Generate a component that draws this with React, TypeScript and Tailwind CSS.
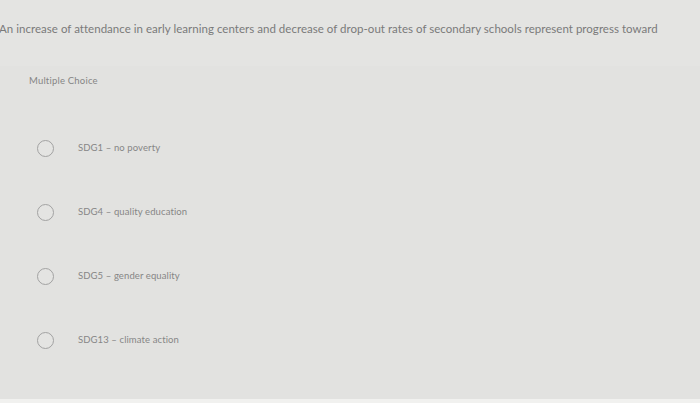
import React from 'react';

const options = [
  'SDG1 – no poverty',
  'SDG4 – quality education',
  'SDG5 – gender equality',
  'SDG13 – climate action',
];

const App: React.FC = () => {
  return (
    <div
      className="w-[700px] h-[403px] bg-[#e2e2e0] flex flex-col overflow-hidden"
      style={{ fontFamily: 'Lato, "Open Sans", sans-serif' }}
    >
      {/* Question */}
      <div className="h-[66px] bg-[#e4e4e2] pt-[20px]">
        <p className="text-[11.5px] text-[#7a7a7a] tracking-[0.03px] whitespace-nowrap -ml-[1px]">
          An increase of attendance in early learning centers and decrease of drop-out rates of secondary schools represent progress toward
        </p>
      </div>

      {/* Type label */}
      <div className="pl-[29px]">
        <span className="text-[9.5px] text-[#858585] tracking-[0.2px]">Multiple Choice</span>
      </div>

      {/* Options */}
      <div className="flex flex-col gap-[46px] pt-[49px] pl-[37px]">
        {options.map((label) => (
          <div key={label} className="flex items-center h-[18px]">
            <span className="w-[17px] h-[17px] rounded-full border border-[#a2a2a2] bg-[#e4e4e2]" />
            <span className="ml-[24px] text-[9.5px] text-[#868686] tracking-[0.1px]">{label}</span>
          </div>
        ))}
      </div>

      <div className="flex-1" />
      <div className="h-[4px] bg-[#f1f1ef]" />
    </div>
  );
};

export default App;
